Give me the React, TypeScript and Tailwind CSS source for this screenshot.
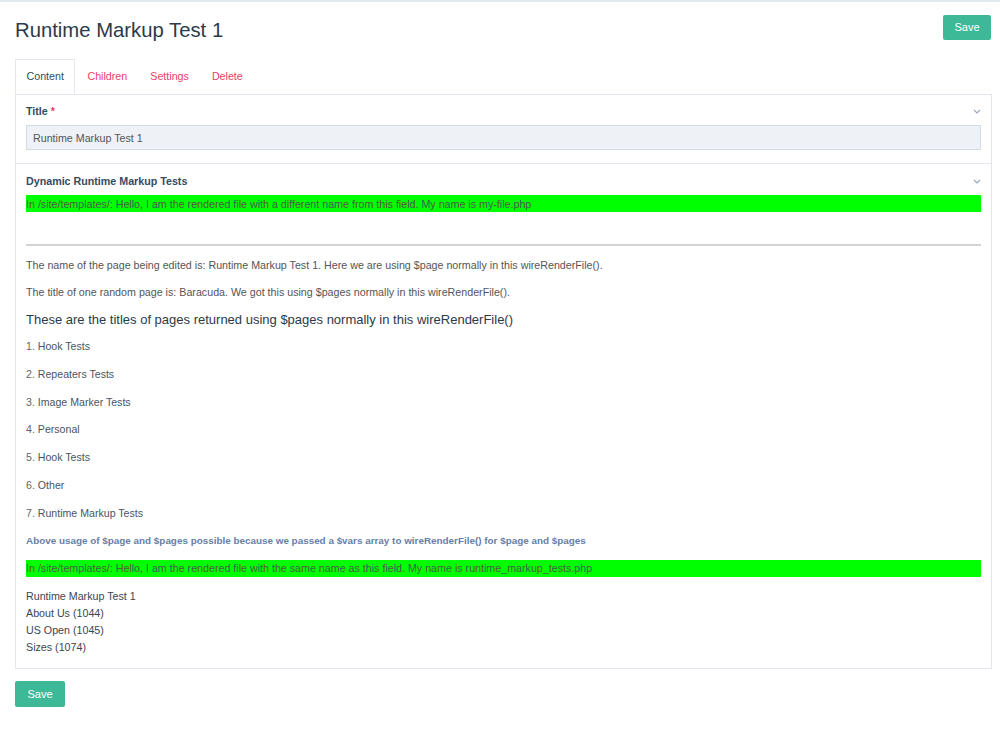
import React from 'react';

const pages = [
  'Hook Tests',
  'Repeaters Tests',
  'Image Marker Tests',
  'Personal',
  'Hook Tests',
  'Other',
  'Runtime Markup Tests',
];

const children = ['Runtime Markup Test 1', 'About Us (1044)', 'US Open (1045)', 'Sizes (1074)'];

const Chevron: React.FC = () => (
  <svg width="8" height="5" viewBox="0 0 8 5" className="text-[#9aa7b8]">
    <path d="M1 1l3 3 3-3" fill="none" stroke="currentColor" strokeWidth="1.2" />
  </svg>
);

const App: React.FC = () => {
  return (
    <div className="min-h-[753px] w-[1000px] bg-white font-['Liberation_Sans',Arial,sans-serif] text-[#354b60]">
      <div className="h-[3px] border-t-2 border-[#e2e8ef]" />

      {/* Header */}
      <div className="flex items-start justify-between pl-[15px] pr-[9px] pt-[12px]">
        <h1 className="text-[20.3px] leading-[30px] text-[#2b3a4a]">Runtime Markup Test 1</h1>
        <button className="h-[25px] w-[48px] rounded-[2px] bg-[#3eb998] text-[11px] text-white">Save</button>
      </div>

      {/* Tabs */}
      <div className="mt-[14px] flex px-[15px]">
        <div className="relative z-10 -mb-px flex h-[35px] items-center border border-b-white border-[#e3e6ec] bg-white px-[10.5px] text-[10.7px] text-[#354b60]">
          Content
        </div>
        <div className="flex h-[35px] items-center pl-[12px] pr-[11.5px] text-[10.7px] text-[#e83e6a]">Children</div>
        <div className="flex h-[35px] items-center px-[11.5px] text-[10.7px] text-[#e83e6a]">Settings</div>
        <div className="flex h-[35px] items-center px-[11.5px] text-[10.7px] text-[#e83e6a]">Delete</div>
      </div>

      {/* Panel */}
      <div className="mx-[15px] w-[977px] border border-[#e3e6ec]">
        {/* Title field */}
        <div className="border-b border-[#e3e6ec] px-[10px] pb-[13px] pt-[8px]">
          <div className="flex items-center justify-between">
            <span className="text-[10.7px] font-bold">
              Title <span className="text-[#e83e6a]">*</span>
            </span>
            <Chevron />
          </div>
          <div className="mt-[6px] flex h-[25px] w-[955px] items-center border border-[#d4dbe4] bg-[#eef1f6] px-[6px] text-[10.7px] text-[#555]">
            Runtime Markup Test 1
          </div>
        </div>

        {/* Dynamic field */}
        <div className="px-[10px] pb-[12px] pt-[9px]">
          <div className="flex items-center justify-between">
            <span className="text-[10.7px] font-bold">Dynamic Runtime Markup Tests</span>
            <Chevron />
          </div>
          <div className="mt-[6px] flex h-[17px] w-[955px] items-center bg-[#00ff00] text-[10.7px] text-[#4a5a4a]">
            In /site/templates/: Hello, I am the rendered file with a different name from this field. My name is my-file.php
          </div>
          <div className="mt-[32px] h-[2px] w-[955px] bg-[#d2d2d2]" />
          <p className="mt-[12px] text-[10.7px] leading-[14px] text-[#555]">
            The name of the page being edited is: Runtime Markup Test 1. Here we are using $page normally in this wireRenderFile().
          </p>
          <p className="mt-[13px] text-[10.7px] leading-[14px] text-[#555]">
            The title of one random page is: Baracuda. We got this using $pages normally in this wireRenderFile().
          </p>
          <h3 className="mt-[12px] text-[13px] leading-[18px] text-[#2b3a4a]">
            These are the titles of pages returned using $pages normally in this wireRenderFile()
          </h3>
          <ol className="mt-[4px] flex flex-col">
            {pages.map((title, i) => (
              <li key={i} className="flex h-[27.8px] items-center text-[10.6px] text-[#4b5563]">
                <span className="text-[#666]">{i + 1}.</span>&nbsp;{title}
              </li>
            ))}
          </ol>
          <p className="mt-[6px] text-[9.9px] font-bold leading-[14px] text-[#6680a8]">
            Above usage of $page and $pages possible because we passed a $vars array to wireRenderFile() for $page and $pages
          </p>
          <div className="mt-[12px] flex h-[17px] w-[955px] items-center bg-[#00ff00] text-[10.7px] text-[#4a5a4a]">
            In /site/templates/: Hello, I am the rendered file with the same name as this field. My name is runtime_markup_tests.php
          </div>
          <div className="mt-[11px] flex flex-col text-[10.7px] leading-[17px] text-[#3b4650]">
            {children.map((c) => (
              <span key={c}>{c}</span>
            ))}
          </div>
        </div>
      </div>

      <div className="px-[15px] pt-[12px]">
        <button className="h-[26px] w-[50px] rounded-[2px] bg-[#3eb998] text-[11px] text-white">Save</button>
      </div>
    </div>
  );
};

export default App;
